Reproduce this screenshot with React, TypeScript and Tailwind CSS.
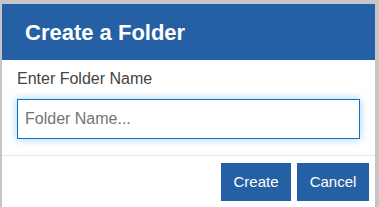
export default function App() {
  return (
    <div
      className="h-[207px] w-[379px] overflow-hidden bg-[#c6c6c6] pl-[2px] pr-[4px] pt-[4px]"
      style={{ fontFamily: '"Liberation Sans", Arial, sans-serif' }}
    >
      <div className="h-full bg-white">
        {/* Header */}
        <div className="flex h-[56px] items-center bg-[#2560a4] pl-[23px]">
          <h1 className="text-[22px] font-bold text-white">Create a Folder</h1>
        </div>

        {/* Body */}
        <div className="px-[15px] pt-[9px] pb-[16px]">
          <label className="block text-[16px] leading-[20px] text-[#444]">Enter Folder Name</label>
          <input
            autoFocus
            placeholder="Folder Name..."
            className="mt-[10px] block h-[40px] w-full border border-[#0d70cf] px-[7px] text-[16px] text-[#333] caret-[#333] outline-none placeholder:text-[#757575] shadow-[0_0_8px_rgba(102,175,233,0.6)]"
          />
        </div>

        {/* Footer */}
        <div className="flex justify-end gap-[6px] border-t border-[#e5e5e5] pt-[7px] pr-[6px]">
          <button className="h-[38px] w-[70px] bg-[#2560a4] text-[15px] text-white">Create</button>
          <button className="h-[38px] w-[72px] bg-[#2560a4] text-[15px] text-white">Cancel</button>
        </div>
      </div>
    </div>
  );
}
